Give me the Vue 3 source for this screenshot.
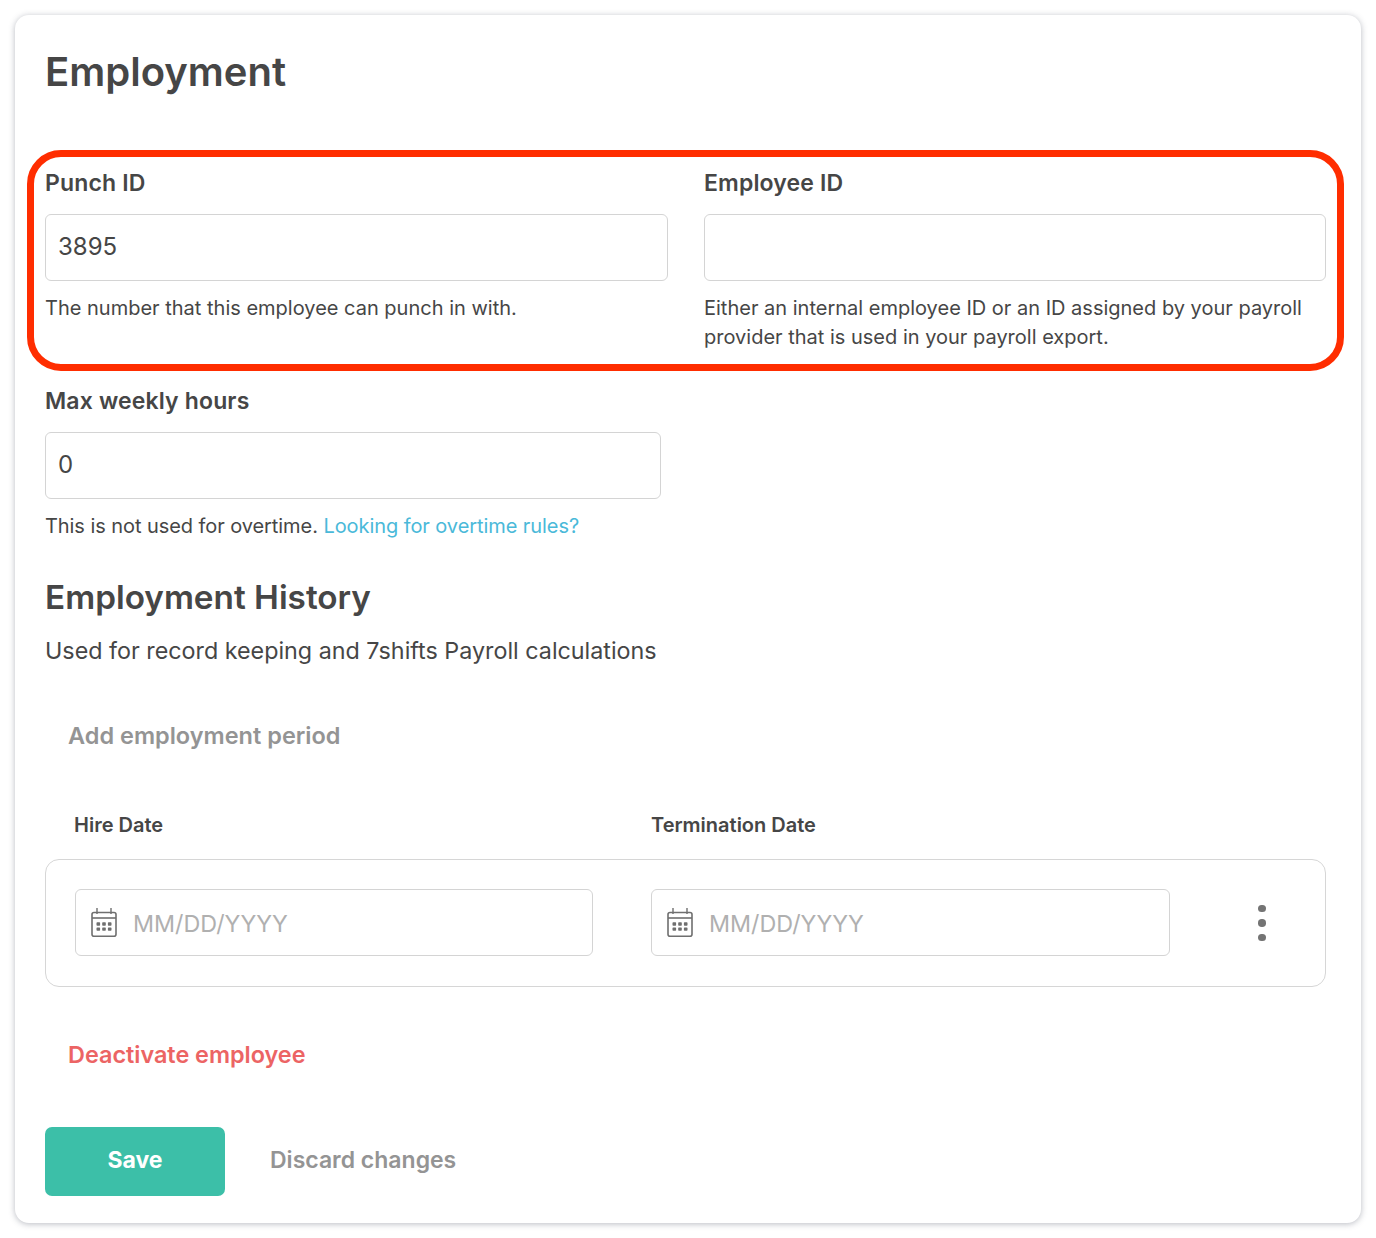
<template>
  <div class="page">
    <div class="card">
      <h1 class="title">Employment</h1>

      <div class="id-row">
        <div class="field">
          <label class="label">Punch ID</label>
          <div class="input">3895</div>
          <p class="help">The number that this employee can punch in with.</p>
        </div>
        <div class="field">
          <label class="label">Employee ID</label>
          <div class="input"></div>
          <p class="help">Either an internal employee ID or an ID assigned by your payroll provider that is used in your payroll export.</p>
        </div>
        <div class="highlight"></div>
      </div>

      <div class="field hours">
        <label class="label">Max weekly hours</label>
        <div class="input">0</div>
        <p class="help">This is not used for overtime. <a class="link">Looking for overtime rules?</a></p>
      </div>

      <h2 class="subtitle">Employment History</h2>
      <p class="lead">Used for record keeping and 7shifts Payroll calculations</p>

      <a class="add-link">Add employment period</a>

      <div class="date-labels">
        <span class="date-label">Hire Date</span>
        <span class="date-label">Termination Date</span>
      </div>

      <div class="period">
        <div v-for="n in 2" :key="n" class="input date-input" :class="{ wide: n === 2 }">
          <svg class="cal" width="26" height="29" viewBox="0 0 26 29" fill="none">
            <path d="M6 0v6M20 0v6" stroke="#6f6f6f" stroke-width="1.4" />
            <rect x="1" y="4.5" width="24" height="23.7" rx="2" stroke="#6f6f6f" stroke-width="1.6" />
            <path d="M1 10h24" stroke="#6f6f6f" stroke-width="1.6" />
            <g fill="#6f6f6f">
              <rect x="5.5" y="14.3" width="3.6" height="3.4" rx=".7" />
              <rect x="11.2" y="14.3" width="3.6" height="3.4" rx=".7" />
              <rect x="16.9" y="14.3" width="3.6" height="3.4" rx=".7" />
              <rect x="5.5" y="19.4" width="3.6" height="3.4" rx=".7" />
              <rect x="11.2" y="19.4" width="3.6" height="3.4" rx=".7" />
              <rect x="16.9" y="19.4" width="3.6" height="3.4" rx=".7" />
            </g>
          </svg>
          <span class="placeholder">MM/DD/YYYY</span>
        </div>
        <div class="kebab">
          <span></span><span></span><span></span>
        </div>
      </div>

      <a class="deactivate">Deactivate employee</a>

      <div class="actions">
        <button class="save">Save</button>
        <a class="discard">Discard changes</a>
      </div>
    </div>
  </div>
</template>

<script setup>
</script>

<style>
body {
  background: #fff;
}
</style>

<style scoped>
.page {
  padding: 15px;
  font-family: Inter, "Liberation Sans", sans-serif;
  color: #464646;
}

.card {
  box-sizing: border-box;
  width: 1346px;
  height: 1208px;
  padding: 30px 35px 0 30px;
  background: #fff;
  border-radius: 14px;
  box-shadow: 0 1px 6px rgba(70, 75, 95, 0.38);
}

.title {
  margin: 0;
  font-size: 40px;
  line-height: 54px;
  font-weight: 600;
}

.id-row {
  position: relative;
  display: grid;
  grid-template-columns: 623px 622px;
  column-gap: 36px;
  margin-top: 70px;
  height: 218px;
}

.highlight {
  position: absolute;
  left: -18px;
  top: -19px;
  width: 1317px;
  height: 221px;
  box-sizing: border-box;
  border: 7px solid #ff2d00;
  border-radius: 34px;
  pointer-events: none;
}

.label {
  display: block;
  font-size: 23px;
  line-height: 28px;
  font-weight: 600;
  letter-spacing: 0.15px;
}

.input {
  box-sizing: border-box;
  height: 67px;
  margin-top: 17px;
  padding: 0 12px;
  border: 1px solid #d4d4d4;
  border-radius: 6px;
  font-size: 24px;
  line-height: 64px;
}

.help {
  margin: 13px 0 0;
  font-size: 20px;
  line-height: 29px;
}

.hours {
  width: 616px;
}

.hours .help {
  letter-spacing: -0.07px;
}

.link {
  color: #4ab9d9;
}

.subtitle {
  margin: 34px 0 0;
  font-size: 33.3px;
  line-height: 44px;
  font-weight: 600;
}

.lead {
  margin: 16px 0 0;
  font-size: 23.3px;
  line-height: 32px;
}

.add-link {
  display: block;
  margin: 53px 0 0 23px;
  font-size: 23.5px;
  line-height: 32px;
  font-weight: 600;
  color: #949494;
}

.date-labels {
  display: flex;
  margin: 59px 0 0 29px;
}

.date-label {
  width: 577px;
  font-size: 20px;
  line-height: 28px;
  font-weight: 600;
}

.period {
  box-sizing: border-box;
  display: flex;
  height: 128px;
  margin-top: 20px;
  padding: 29px 0 0 29px;
  border: 1px solid #d6d6d6;
  border-radius: 14px;
}

.date-input {
  display: flex;
  align-items: center;
  gap: 16px;
  width: 518px;
  margin: 0 58px 0 0;
  padding: 0 0 0 15px;
}

.date-input.wide {
  width: 519px;
}

.placeholder {
  padding-top: 2px;
  font-size: 23.3px;
  color: #b0b0b0;
}

.kebab {
  display: flex;
  flex-direction: column;
  gap: 7px;
  margin: 15.5px 0 0 30px;
}

.kebab span {
  width: 7.5px;
  height: 7.5px;
  border-radius: 50%;
  background: #747474;
}

.deactivate {
  display: block;
  margin: 52px 0 0 23px;
  font-size: 23.4px;
  line-height: 32px;
  font-weight: 600;
  color: #ec6464;
}

.actions {
  display: flex;
  align-items: center;
  gap: 45px;
  margin-top: 56px;
}

.save {
  width: 180px;
  height: 69px;
  padding: 0 0 3px;
  border: none;
  border-radius: 7px;
  background: #3cbfa8;
  color: #fff;
  font-family: inherit;
  font-size: 23px;
  font-weight: 700;
}

.discard {
  padding-bottom: 4px;
  font-size: 23px;
  font-weight: 600;
  color: #949494;
}
</style>
